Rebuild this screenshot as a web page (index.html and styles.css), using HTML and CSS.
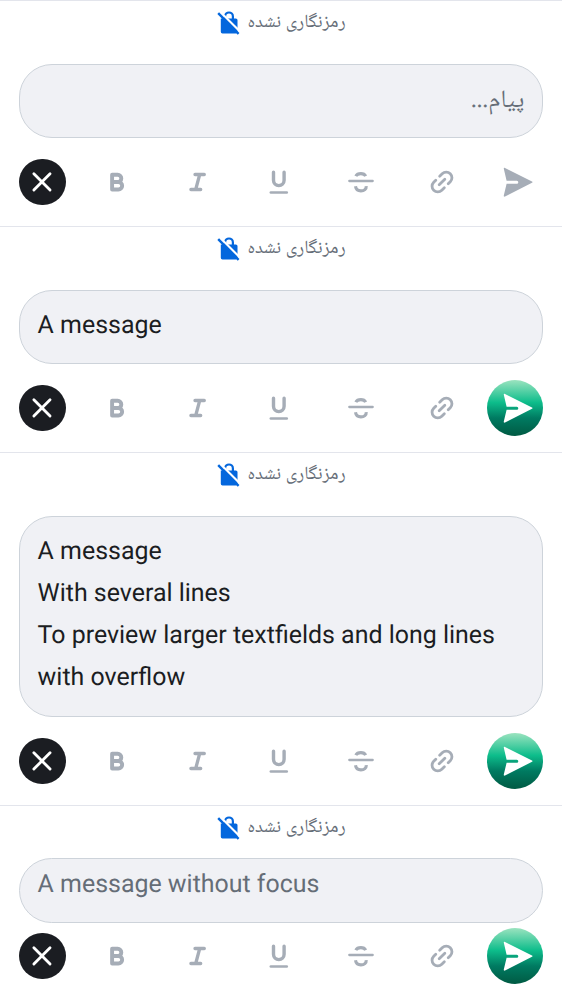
FILE: index.html
```
<!DOCTYPE html>
<html lang="fa">
<head>
<meta charset="utf-8">
<title>Composer</title>
<link rel="stylesheet" href="styles.css">
</head>
<body>
<svg class="defs" aria-hidden="true">
  <symbol id="lock" viewBox="0 0 24 26">
    <path class="fill" d="M5 8.4H7V6.4a5 5 0 0 1 10 0V8.4H18.8a1.7 1.7 0 0 1 1.7 1.7V21.8a1.7 1.7 0 0 1-1.7 1.7H5.5A1.7 1.7 0 0 1 3.8 21.8V8.4ZM9.2 8.4h5.6V6.4a2.8 2.8 0 0 0-5.6 0Z" fill-rule="evenodd"/>
    <path class="gap" d="M2.6 1.2 23.4 22"/>
    <path class="slash" d="M1.2 3.2 21.6 23.8"/>
  </symbol>
  <symbol id="close" viewBox="0 0 46 46"><path d="m14.7 14.7 16 16M30.7 14.7l-16 16" stroke-width="2.8"/></symbol>
  <symbol id="bold" viewBox="0 0 32 32"><path d="M11.1 8.8h5.6a3.6 3.6 0 0 1 0 7.2h-5.6M11.1 16h6.3a3.75 3.75 0 0 1 0 7.5h-6.3ZM11.1 8.8v14.7" stroke-width="3.9"/></symbol>
  <symbol id="italic" viewBox="0 0 32 32"><path d="M13 8.5h9.3M8.9 23.5h9.8M17.7 8.5l-4 15" stroke-width="3.3"/></symbol>
  <symbol id="underline" viewBox="0 0 32 32"><path d="M10.5 6.2v8.1a5.3 5.3 0 0 0 10.6 0V6.2" stroke-width="3.4"/><path d="M7.8 26.5h16" stroke-width="2.5"/></symbol>
  <symbol id="strike" viewBox="0 0 32 32"><path d="M4.3 15h23.4" stroke-width="2.3"/><path d="M10.8 10.1c.8-1.6 2.8-2.5 5.1-2.5s4 .9 4.8 2.5M10.5 20.3c.4 2.9 2.6 4.6 5.4 4.6 3.3 0 5.6-1.8 5.3-4.7" stroke-width="3.1" stroke-linecap="butt"/></symbol>
  <symbol id="link" viewBox="0 0 32 32"><g transform="rotate(-45 16 16)" stroke-width="2.8"><path d="M12.9 10.3H10a5.7 5.7 0 0 0 0 11.4h3.600M18.400 10.300h3.600a5.700 5.700 0 0 1 0 11.400h-2.900M12 16h8"/></g></symbol>
  <symbol id="send" viewBox="0 0 56 56"><path d="M16.8 14.8c-.2-.8.4-1.3 1.2-.9l27 13.6c.7.4.7.9 0 1.300L18 42.500c-.8.4-1.4-.1-1.2-.9l2.800-11.8h10.200a1.500 1.500 0 0 0 0-3H19.600Z"/></symbol>
</svg>

<section class="composer">
  <div class="status" dir="rtl"><span>رمزنگاری نشده</span><svg class="lock"><use href="#lock"/></svg></div>
  <div class="field placeholder" dir="rtl">پیام<span class="dots">...</span></div>
  <div class="toolbar">
    <button class="close"><svg><use href="#close"/></svg></button>
    <div class="formats"><svg><use href="#bold"/></svg><svg><use href="#italic"/></svg><svg><use href="#underline"/></svg><svg><use href="#strike"/></svg><svg><use href="#link"/></svg></div>
    <button class="send disabled"><svg><use href="#send"/></svg></button>
  </div>
</section>

<section class="composer">
  <div class="status" dir="rtl"><span>رمزنگاری نشده</span><svg class="lock"><use href="#lock"/></svg></div>
  <div class="field">A message</div>
  <div class="toolbar">
    <button class="close"><svg><use href="#close"/></svg></button>
    <div class="formats"><svg><use href="#bold"/></svg><svg><use href="#italic"/></svg><svg><use href="#underline"/></svg><svg><use href="#strike"/></svg><svg><use href="#link"/></svg></div>
    <button class="send"><svg><use href="#send"/></svg></button>
  </div>
</section>

<section class="composer tall">
  <div class="status" dir="rtl"><span>رمزنگاری نشده</span><svg class="lock"><use href="#lock"/></svg></div>
  <div class="field">A message<br>With several lines<br>To preview larger textfields and long lines with overflow</div>
  <div class="toolbar">
    <button class="close"><svg><use href="#close"/></svg></button>
    <div class="formats"><svg><use href="#bold"/></svg><svg><use href="#italic"/></svg><svg><use href="#underline"/></svg><svg><use href="#strike"/></svg><svg><use href="#link"/></svg></div>
    <button class="send"><svg><use href="#send"/></svg></button>
  </div>
</section>

<section class="composer compact">
  <div class="status" dir="rtl"><span>رمزنگاری نشده</span><svg class="lock"><use href="#lock"/></svg></div>
  <div class="field unfocused">A message without focus</div>
  <div class="toolbar">
    <button class="close"><svg><use href="#close"/></svg></button>
    <div class="formats"><svg><use href="#bold"/></svg><svg><use href="#italic"/></svg><svg><use href="#underline"/></svg><svg><use href="#strike"/></svg><svg><use href="#link"/></svg></div>
    <button class="send"><svg><use href="#send"/></svg></button>
  </div>
</section>
</body>
</html>
```
FILE: styles.css
```
* { box-sizing: border-box; }
body {
  margin: 0;
  background: #fff;
  font-family: Roboto, "Noto Naskh Arabic", "Noto Sans Arabic", "DejaVu Sans", sans-serif;
  text-rendering: geometricPrecision;
}
.defs { position: absolute; width: 0; height: 0; }
.composer {
  height: 226px;
  padding: 0 19px;
  border-top: 1px solid #e3e5ec;
  overflow: hidden;
}
.composer.tall { height: 353px; }
.composer.compact { height: 195px; }
.status {
  display: flex;
  align-items: center;
  justify-content: center;
  gap: 7px;
  height: 43px;
  padding-top: 1px;
  color: #656d77;
  font-size: 18.5px;
  white-space: nowrap;
}
.status span {
  display: flex;
  justify-content: center;
  width: 98px;
}
.lock { width: 24px; height: 26px; flex: none; }
.fill { fill: #0467dd; }
.gap { stroke: #fff; stroke-width: 2.2; }
.slash { stroke: #0467dd; stroke-width: 2.4; }
.field {
  height: 74px;
  margin-top: 20px;
  padding: 14px 17.6px 0;
  border: 1px solid #cdd3da;
  border-radius: 33px;
  background: #f0f1f5;
  color: #1b1d22;
  font-size: 24.95px;
  line-height: 42px;
}
.tall .field { height: 201px; }
.compact .field { height: 65px; margin-top: 9px; padding-top: 5px; }
.field.placeholder, .field.unfocused { color: #656d77; }
.dots { font-size: 22px; letter-spacing: -1.2px; -webkit-text-stroke: 0.4px #656d77; }
.toolbar {
  display: flex;
  align-items: center;
  height: 56px;
  margin-top: 16px;
}
.compact .toolbar { margin-top: 5px; }
button {
  flex: none;
  padding: 0;
  border: 0;
  border-radius: 50%;
}
button svg { display: block; width: 100%; height: 100%; }
.close {
  width: 46.5px;
  height: 46.5px;
  background: #1b1d22;
  fill: none;
  stroke: #fff;
  stroke-linecap: round;
}
.formats {
  display: flex;
  justify-content: space-around;
  width: 406.5px;
  margin-left: 10.6px;
  margin-right: auto;
  color: #a6adb7;
  fill: none;
  stroke: #a6adb7;
  stroke-linecap: round;
  stroke-linejoin: round;
}
.formats svg { width: 32px; height: 32px; }
.send {
  width: 56px;
  height: 56px;
  fill: #fff;
  background: linear-gradient(#9be3bf 0%, #0dbd8b 40%, #007a61 68%, #005a43 100%);
}
.send.disabled { background: none; fill: #a6adb7; }
```
